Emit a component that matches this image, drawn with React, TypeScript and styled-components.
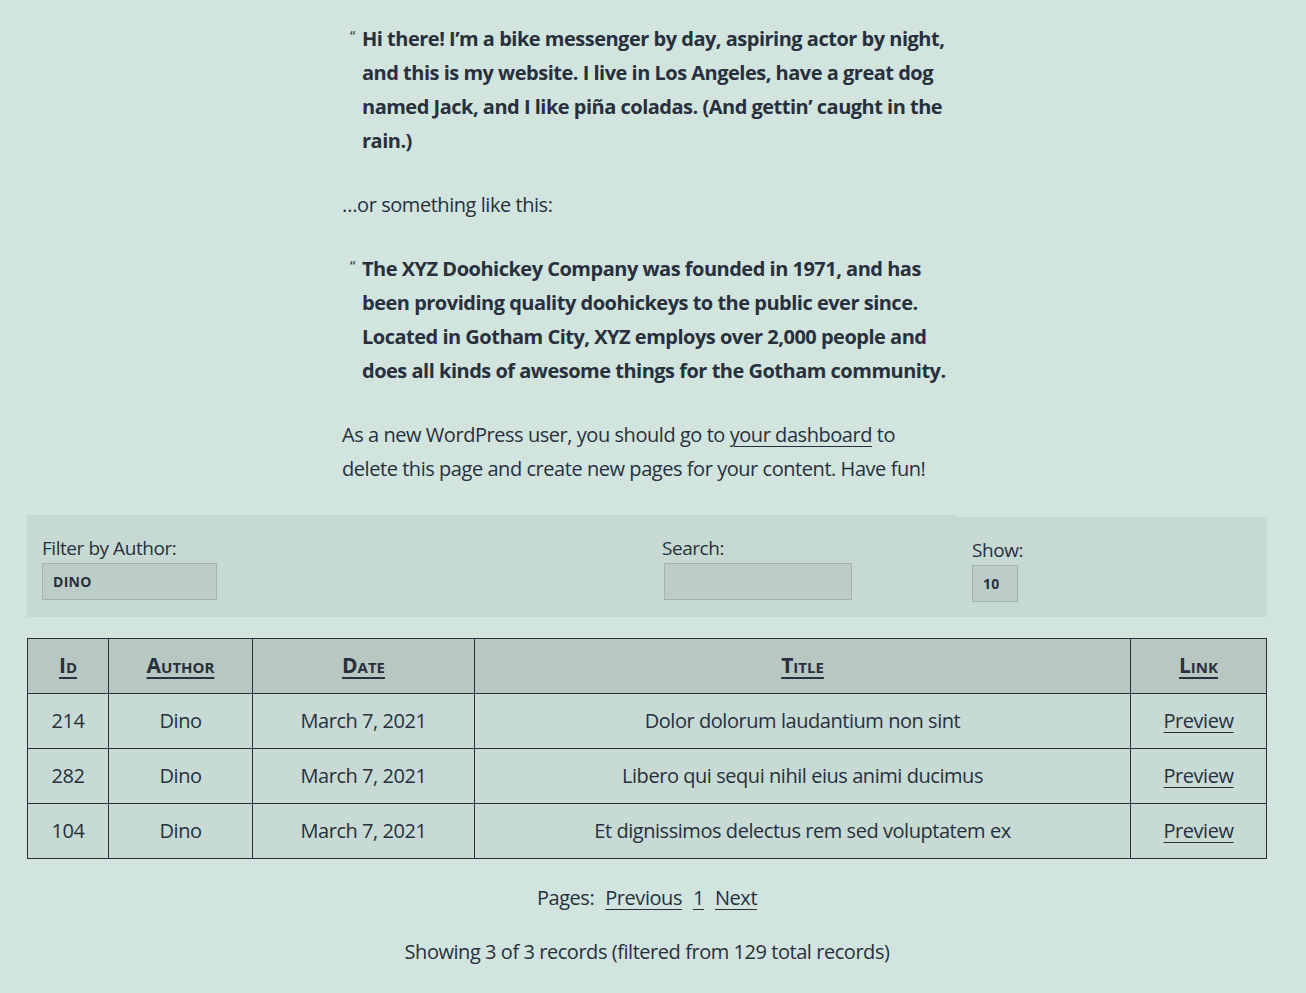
import React from 'react';
import styled, { createGlobalStyle } from 'styled-components';

const GlobalStyle = createGlobalStyle`
  html, body {
    margin: 0;
    padding: 0;
    background: #d1e4dd;
  }
  body {
    color: #28303d;
    font-family: "Open Sans", "Noto Sans", sans-serif;
    font-size: 20px;
    line-height: 1.7;
    letter-spacing: -0.45px;
  }
`;

const Page = styled.div`
  padding: 22px 12px 30px 0;
  display: flex;
  flex-direction: column;
  align-items: center;
`;

const Content = styled.div`
  width: 610px;
  display: flex;
  flex-direction: column;
  gap: 30px;
`;

const Quote = styled.blockquote`
  position: relative;
  margin: 0;
  padding-left: 20px;
  font-weight: 700;
  letter-spacing: -0.5px;

  &::before {
    content: '“';
    position: absolute;
    left: 8px;
    top: 6px;
    font-size: 15px;
    line-height: 1;
    font-weight: 400;
  }
`;

const Para = styled.p`
  margin: 0;
`;

const Link = styled.a`
  color: #28303d;
  text-decoration: underline;
  text-underline-offset: 4px;
  text-decoration-thickness: 1px;
`;

const Wide = styled.div`
  width: 1240px;
  margin-top: 29px;
`;

const FilterBar = styled.div`
  display: grid;
  grid-template-columns: repeat(4, 310px);
  height: 102px;
`;

const FilterCell = styled.div<{ $span?: number; $offset?: number }>`
  grid-column: span ${p => p.$span ?? 1};
  background: #c6d9d3;
  margin-top: ${p => p.$offset ?? 0}px;
  padding: 18px 15px 0;
  display: flex;
  flex-direction: column;
  align-items: flex-start;
`;

const Label = styled.label`
  font-size: 19px;
  line-height: 30px;
`;

const Field = styled.div<{ $w: number; $indent?: number }>`
  width: ${p => p.$w}px;
  height: 37px;
  box-sizing: border-box;
  margin-left: ${p => p.$indent ?? 0}px;
  background: #bccdc7;
  border: 1px solid #a2b2ad;
  font-size: 14px;
  font-weight: 700;
  line-height: 35px;
  padding-left: 10px;
  letter-spacing: 0.3px;
`;

const Table = styled.table`
  width: 1240px;
  margin-top: 21px;
  border-collapse: collapse;
  border: 1px solid #28303d;
`;

const Th = styled.th<{ $w?: number }>`
  width: ${p => (p.$w ? p.$w + 'px' : 'auto')};
  height: 54px;
  background: #b8c7c2;
  border: 1px solid #28303d;
  font-variant: small-caps;
  font-weight: 700;
  font-size: 21px;
  letter-spacing: 0;
  padding: 0;
  text-align: center;

  span {
    text-decoration: underline;
    text-underline-offset: 4px;
    text-decoration-thickness: 1.5px;
  }
`;

const Td = styled.td`
  height: 54px;
  background: #c7dad4;
  border: 1px solid #28303d;
  text-align: center;
  padding: 0;
`;

const Pager = styled.div`
  margin-top: 22px;
  display: flex;
  gap: 11px;
  justify-content: center;
`;

const Summary = styled.div`
  margin-top: 20px;
  text-align: center;
`;

const rows = [
  { id: 214, title: 'Dolor dolorum laudantium non sint' },
  { id: 282, title: 'Libero qui sequi nihil eius animi ducimus' },
  { id: 104, title: 'Et dignissimos delectus rem sed voluptatem ex' },
];

export default function App() {
  return (
    <>
      <GlobalStyle />
      <Page>
        <Content>
          <Quote>
            Hi there! I’m a bike messenger by day, aspiring actor by night, and this is my website. I live in Los
            Angeles, have a great dog named Jack, and I like piña coladas. (And gettin’ caught in the rain.)
          </Quote>
          <Para>…or something like this:</Para>
          <Quote>
            The XYZ Doohickey Company was founded in 1971, and has been providing quality doohickeys to the public
            ever since. Located in Gotham City, XYZ employs over 2,000 people and does all kinds of awesome things for
            the Gotham community.
          </Quote>
          <Para>
            As a new WordPress user, you should go to <Link href="#">your dashboard</Link> to delete this page and
            create new pages for your content. Have fun!
          </Para>
        </Content>
        <Wide>
          <FilterBar>
            <FilterCell $span={2}>
              <Label>Filter by Author:</Label>
              <Field $w={175}>DINO</Field>
            </FilterCell>
            <FilterCell>
              <Label>Search:</Label>
              <Field $w={188} $indent={2} />
            </FilterCell>
            <FilterCell $offset={2}>
              <Label>Show:</Label>
              <Field $w={46}>10</Field>
            </FilterCell>
          </FilterBar>
          <Table>
            <thead>
              <tr>
                <Th $w={80}><span>Id</span></Th>
                <Th $w={143}><span>Author</span></Th>
                <Th $w={221}><span>Date</span></Th>
                <Th><span>Title</span></Th>
                <Th $w={135}><span>Link</span></Th>
              </tr>
            </thead>
            <tbody>
              {rows.map(r => (
                <tr key={r.id}>
                  <Td>{r.id}</Td>
                  <Td>Dino</Td>
                  <Td>March 7, 2021</Td>
                  <Td>{r.title}</Td>
                  <Td>
                    <Link href="#">Preview</Link>
                  </Td>
                </tr>
              ))}
            </tbody>
          </Table>
          <Pager>
            <span>Pages:</span>
            <Link href="#">Previous</Link>
            <Link href="#">1</Link>
            <Link href="#">Next</Link>
          </Pager>
          <Summary>Showing 3 of 3 records (filtered from 129 total records)</Summary>
        </Wide>
      </Page>
    </>
  );
}
